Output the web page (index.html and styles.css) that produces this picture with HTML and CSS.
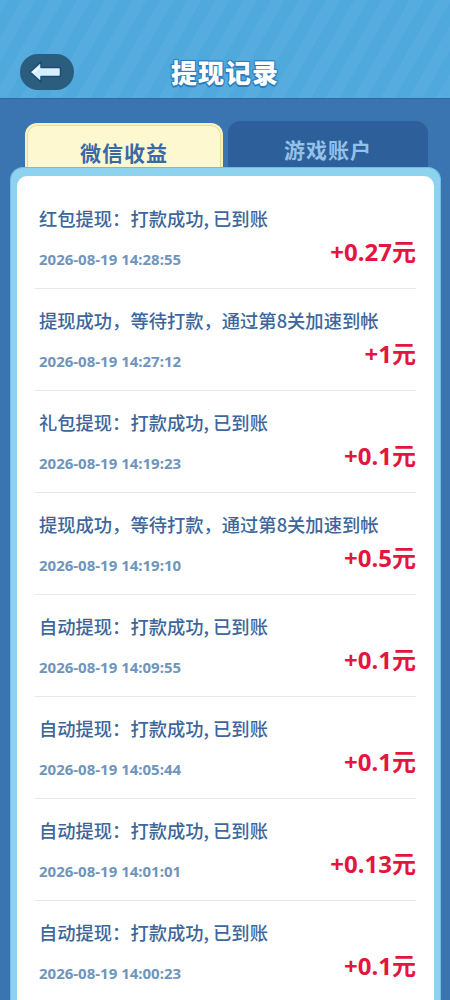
FILE: index.html
```html
<!DOCTYPE html>
<html lang="zh-CN">
<head>
    <meta charset="UTF-8">
    <meta name="viewport" content="width=device-width, initial-scale=1.0">
    <title>提现记录</title>
    <link rel="stylesheet" href="styles.css">
</head>
<body>
    <div class="header">
        <div class="back-btn">
            <svg width="34" height="26" viewBox="0 0 34 26">
                <path d="M2 13 L13 3 L13 8.5 L31 8.5 Q32.5 8.5 32.5 10 L32.5 16 Q32.5 17.5 31 17.5 L13 17.5 L13 23 Z" fill="#d6eeff" stroke="#1d4d6e" stroke-width="1.5" stroke-linejoin="round"/>
                <path d="M6 13 L11 8.5" stroke="#ffffff" stroke-width="1.5" stroke-linecap="round"/>
            </svg>
        </div>
        <h1 class="title">提现记录</h1>
        <div class="spacer"></div>
    </div>

    <div class="tabs">
        <div class="tab active">微信收益</div>
        <div class="tab">游戏账户</div>
    </div>

    <div class="panel">
        <div class="panel-inner">
            <div class="row">
                <div class="row-title">红包提现：打款成功, 已到账</div>
                <div class="row-bottom">
                    <span class="date">2026-08-19 14:28:55</span>
                    <span class="amount">+0.27元</span>
                </div>
            </div>
            <div class="row">
                <div class="row-title">提现成功，等待打款，通过第8关加速到帐</div>
                <div class="row-bottom">
                    <span class="date">2026-08-19 14:27:12</span>
                    <span class="amount">+1元</span>
                </div>
            </div>
            <div class="row">
                <div class="row-title">礼包提现：打款成功, 已到账</div>
                <div class="row-bottom">
                    <span class="date">2026-08-19 14:19:23</span>
                    <span class="amount">+0.1元</span>
                </div>
            </div>
            <div class="row">
                <div class="row-title">提现成功，等待打款，通过第8关加速到帐</div>
                <div class="row-bottom">
                    <span class="date">2026-08-19 14:19:10</span>
                    <span class="amount">+0.5元</span>
                </div>
            </div>
            <div class="row">
                <div class="row-title">自动提现：打款成功, 已到账</div>
                <div class="row-bottom">
                    <span class="date">2026-08-19 14:09:55</span>
                    <span class="amount">+0.1元</span>
                </div>
            </div>
            <div class="row">
                <div class="row-title">自动提现：打款成功, 已到账</div>
                <div class="row-bottom">
                    <span class="date">2026-08-19 14:05:44</span>
                    <span class="amount">+0.1元</span>
                </div>
            </div>
            <div class="row">
                <div class="row-title">自动提现：打款成功, 已到账</div>
                <div class="row-bottom">
                    <span class="date">2026-08-19 14:01:01</span>
                    <span class="amount">+0.13元</span>
                </div>
            </div>
            <div class="row">
                <div class="row-title">自动提现：打款成功, 已到账</div>
                <div class="row-bottom">
                    <span class="date">2026-08-19 14:00:23</span>
                    <span class="amount">+0.1元</span>
                </div>
            </div>
        </div>
    </div>
</body>
</html>
```

FILE: styles.css
```css
body {
    margin: 0;
    width: 450px;
    height: 1000px;
    overflow: hidden;
    background-color: #3b75b1;
    font-family: "Noto Sans CJK SC", "Noto Sans", sans-serif;
}
.header {
    height: 99px;
    box-sizing: border-box;
    padding: 54px 20px 0;
    display: flex;
    align-items: flex-start;
    background-color: #4fa9dd;
    background-image: repeating-linear-gradient(-60deg, rgba(255,255,255,0.04) 0, rgba(255,255,255,0.04) 12px, transparent 12px, transparent 24px);
    border-bottom: 1px solid #2f69a3;
}
.back-btn {
    width: 54px;
    height: 36px;
    border-radius: 18px;
    background-color: #2b5d7f;
    display: flex;
    align-items: center;
    justify-content: center;
}
.back-btn svg {
    margin-left: -4px;
}
.spacer {
    width: 54px;
}
.title {
    flex: 1;
    margin: 0;
    height: 36px;
    line-height: 36px;
    text-align: center;
    font-size: 26px;
    font-weight: 900;
    letter-spacing: 1px;
    color: #ffffff;
    text-shadow: 0 0 2px #2c7fc0, 1px 1px 0 #2c7fc0, -1px -1px 0 #2c7fc0, 1px -1px 0 #2c7fc0, -1px 1px 0 #2c7fc0, 0 2px 0 #2a78b6;
}
.tabs {
    display: flex;
    padding: 22px 22px 0 25px;
    margin-bottom: -10px;
}
.tab {
    height: 56px;
    width: 200px;
    box-sizing: border-box;
    border-radius: 12px 12px 0 0;
    background-color: #2d5f9b;
    color: #93c1e8;
    font-size: 21px;
    font-weight: bold;
    text-align: center;
    line-height: 56px;
    letter-spacing: 1px;
    margin-left: 5px;
}
.tab.active {
    width: 198px;
    margin-left: 0;
    margin-top: 2px;
    height: 54px;
    line-height: 54px;
    background-color: #fdf8d0;
    color: #3a69a6;
    border: 2px solid #fbf1bd;
    box-shadow: inset 0 0 0 1px #e7dca0;
    border-bottom: none;
}
.panel {
    position: relative;
    margin: 0 9px 0 10px;
    padding: 8px 6px 0;
    background-color: #8dd3ef;
    border: 1px solid #6cbfe3;
    border-bottom: none;
    border-radius: 13px 13px 0 0;
}
.panel-inner {
    background-color: #ffffff;
    border-radius: 10px 10px 0 0;
    padding: 11px 18px 0;
}
.row {
    padding: 20px 0 21px 4px;
    border-bottom: 1px solid #e8e9ec;
}
.row-title {
    font-size: 18.3px;
    line-height: 22px;
    color: #3d679c;
    font-weight: 500;
}
.row-bottom {
    display: flex;
    justify-content: space-between;
    align-items: flex-end;
    margin-top: 8px;
}
.date {
    font-family: "Noto Sans", sans-serif;
    font-size: 15px;
    font-weight: bold;
    line-height: 20px;
    color: #6f95bd;
    margin-bottom: -2px;
}
.amount {
    font-family: "Noto Sans", "Noto Sans CJK SC", sans-serif;
    font-size: 24px;
    font-weight: bold;
    line-height: 30px;
    color: #e2163f;
}
```
